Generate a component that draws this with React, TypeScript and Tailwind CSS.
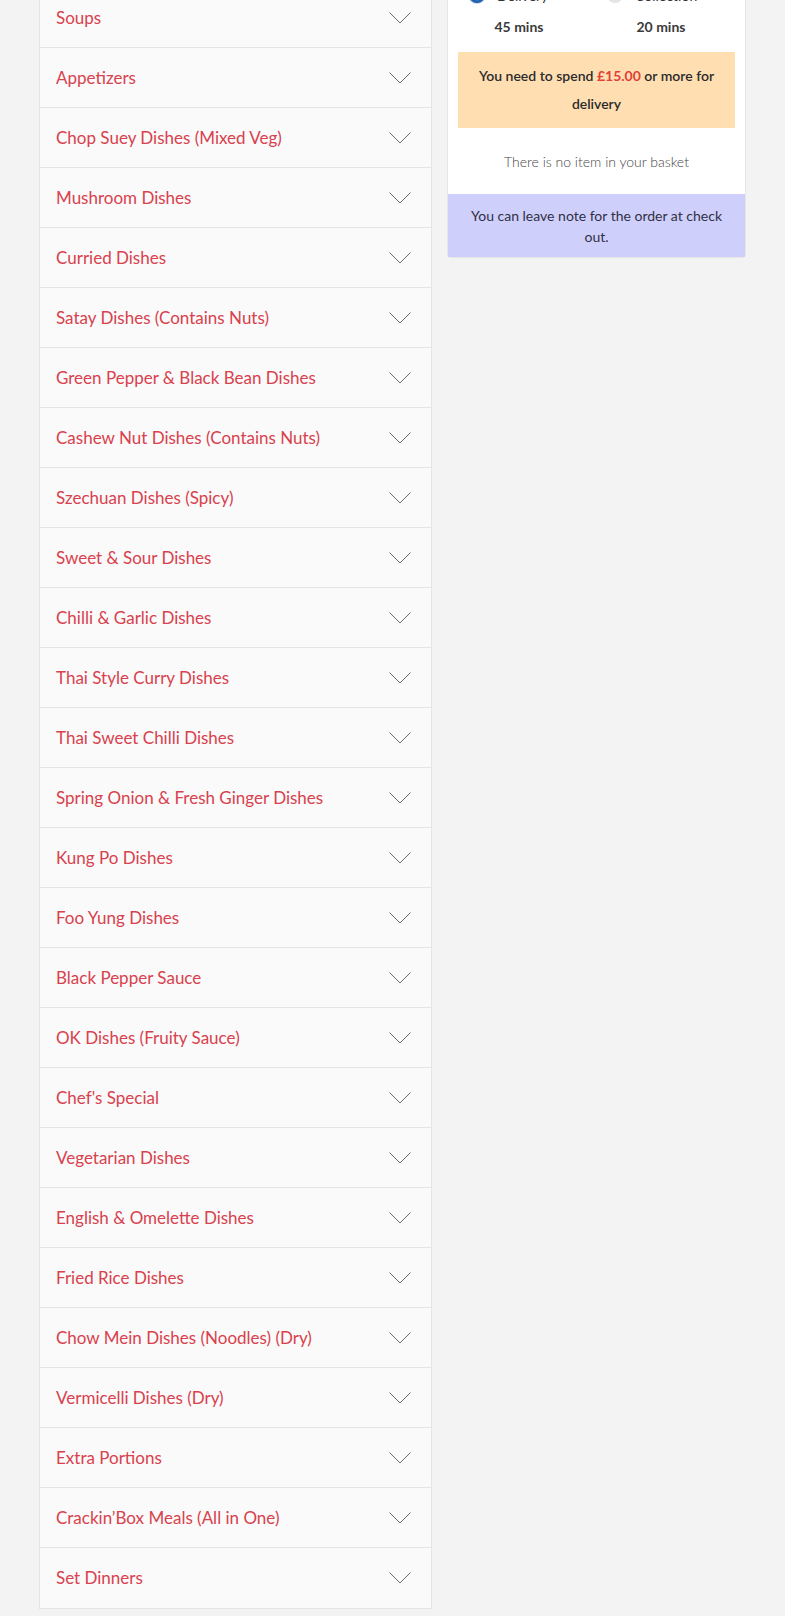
const categories = [
  'Soups',
  'Appetizers',
  'Chop Suey Dishes (Mixed Veg)',
  'Mushroom Dishes',
  'Curried Dishes',
  'Satay Dishes (Contains Nuts)',
  'Green Pepper & Black Bean Dishes',
  'Cashew Nut Dishes (Contains Nuts)',
  'Szechuan Dishes (Spicy)',
  'Sweet & Sour Dishes',
  'Chilli & Garlic Dishes',
  'Thai Style Curry Dishes',
  'Thai Sweet Chilli Dishes',
  'Spring Onion & Fresh Ginger Dishes',
  'Kung Po Dishes',
  'Foo Yung Dishes',
  'Black Pepper Sauce',
  'OK Dishes (Fruity Sauce)',
  "Chef's Special",
  'Vegetarian Dishes',
  'English & Omelette Dishes',
  'Fried Rice Dishes',
  'Chow Mein Dishes (Noodles) (Dry)',
  'Vermicelli Dishes (Dry)',
  'Extra Portions',
  'Crackin’Box Meals (All in One)',
  'Set Dinners',
]

function Chevron() {
  return (
    <svg width="22" height="12" viewBox="0 0 22 12" fill="none" className="shrink-0">
      <polyline points="0.5,0.5 11,11 21.5,0.5" stroke="#6b6b6b" strokeWidth="1" />
    </svg>
  )
}

function CategoryRow({ label }: { label: string }) {
  return (
    <div className="h-[60px] flex items-center justify-between pl-4 pr-5 border-b border-[#e4e4e4] last:border-b-0">
      <span className="text-[17px] text-[#d8414d]">{label}</span>
      <Chevron />
    </div>
  )
}

function Basket() {
  return (
    <aside className="w-[299px] bg-white border border-[#e6e6e6] rounded-b-sm text-[14px] text-[#333]">
      {/* delivery / collection toggle, mostly scrolled out of view */}
      <div className="grid grid-cols-2 w-[284px] h-[18px] items-center">
        <label className="flex items-center gap-3 pl-[21px] -mt-[4px]">
          <span className="w-4 h-4 rounded-full border-2 border-[#1f5fa8] bg-[#2d74c4] ring-1 ring-[#b9d0ec]" />
          <span>Delivery</span>
        </label>
        <label className="flex items-center gap-3 pl-[17px] -mt-[4px]">
          <span className="w-4 h-4 rounded-full bg-[#e4e4e4]" />
          <span>Collection</span>
        </label>
      </div>
      <div className="grid grid-cols-2 w-[284px] mt-[11px] leading-5 font-bold text-[#3a3a3a] text-center">
        <span>45 mins</span>
        <span>20 mins</span>
      </div>
      <div className="mx-[10px] mt-[15px] py-[10px] bg-[#ffdfb2] text-center leading-[28px] font-semibold text-[#2b2b2b]">
        You need to spend <span className="font-bold text-[#e0413a]">£15.00</span> or more for delivery
      </div>
      <p className="mt-6 mb-[22px] text-center leading-5 font-light text-[#444]">There is no item in your basket</p>
      <div className="bg-[#cfcffc] px-[10px] pt-[11px] pb-[10px] text-center leading-[21px] text-[#2f2f45]">
        You can leave note for the order at check out.
      </div>
    </aside>
  )
}

export default function App() {
  return (
    <div className="min-h-screen bg-[#f3f3f3] font-['Lato',sans-serif] overflow-hidden">
      <div className="flex items-start gap-[15px] pl-[39px] -mt-[13px]">
        <div className="w-[393px] bg-[#fafafa] border border-[#e4e4e4]">
          {categories.map((c) => (
            <CategoryRow key={c} label={c} />
          ))}
        </div>
        <Basket />
      </div>
    </div>
  )
}
